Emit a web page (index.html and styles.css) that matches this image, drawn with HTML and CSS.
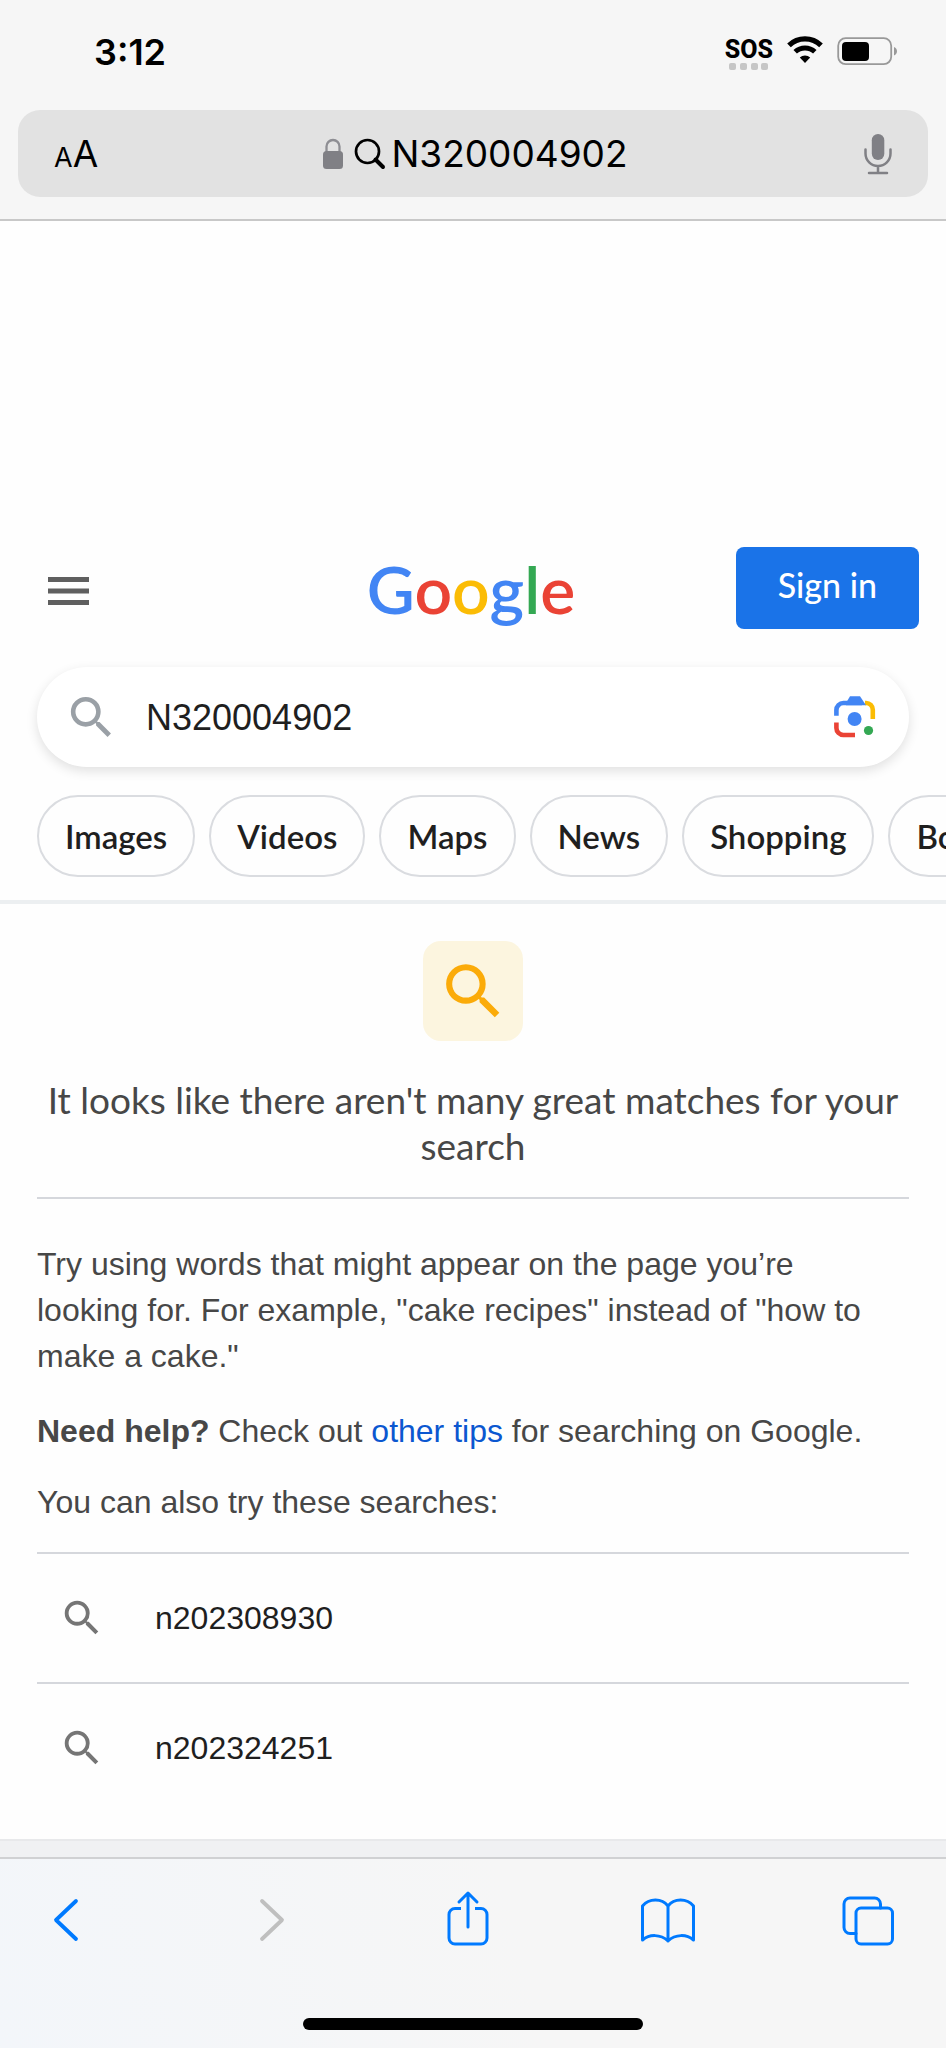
FILE: index.html
```html
<!DOCTYPE html>
<html lang="en">
<head>
<meta charset="utf-8">
<meta name="viewport" content="width=device-width, initial-scale=1">
<title>N320004902 - Google Search</title>
<link rel="stylesheet" href="styles.css">
</head>
<body>
<svg class="defs" aria-hidden="true">
  <symbol id="search" viewBox="0 0 24 24"><path d="M15.5 14h-.79l-.28-.27A6.471 6.471 0 0 0 16 9.5 6.5 6.5 0 1 0 9.5 16c1.61 0 3.09-.59 4.23-1.57l.27.28v.79l5 4.99L20.49 19l-4.99-5zm-6 0C7.01 14 5 11.99 5 9.5S7.01 5 9.5 5 14 7.01 14 9.5 11.99 14 9.5 14z"/></symbol>
</svg>

<header class="browser-top">
  <div class="status">
    <time class="clock">3:12</time>
    <div class="signals">
      <div class="sos"><span>SOS</span>
        <svg width="40" height="8" viewBox="0 0 40 8" fill="#c6c6c6" aria-hidden="true"><rect x="0" y="0" width="7" height="7" rx="2"/><rect x="11" y="0" width="7" height="7" rx="2"/><rect x="22" y="0" width="7" height="7" rx="2"/><rect x="32" y="0" width="7" height="7" rx="2"/></svg>
      </div>
      <svg width="36" height="28" viewBox="0 0 36 28" role="img" aria-label="Wi-Fi"><path d="M2 9.3a23 23 0 0 1 32 0" fill="none" stroke="#000" stroke-width="5.2"/><path d="M8.2 15.8a14.2 14.2 0 0 1 19.6 0" fill="none" stroke="#000" stroke-width="5"/><path d="M12.8 21.6a7.6 7.6 0 0 1 10.4 0L18 27z"/></svg>
      <svg width="62" height="30" viewBox="0 0 62 30" role="img" aria-label="Battery"><rect x="1.2" y="2.2" width="53" height="26" rx="7.5" fill="none" stroke="#999" stroke-width="1.8"/><rect x="5" y="6" width="27" height="19" rx="4"/><path d="M57 11c4 1.500 4 7 0 8.500z" fill="#999"/></svg>
    </div>
  </div>
  <div class="address">
    <button class="text-size" type="button" aria-label="Page settings"><span class="small-a">A</span><span>A</span></button>
    <div class="location">
      <svg width="22" height="32" viewBox="0 0 22 32" aria-hidden="true"><path d="M4.500 14V8.500a6.500 6.500 0 0 1 13 0V14" fill="none" stroke="#8e8e93" stroke-width="2.300"/><rect x="1" y="13" width="20" height="18" rx="3.500" fill="#808085"/></svg>
      <svg width="32" height="32" viewBox="0 0 32 32" fill="none" stroke="#000" aria-hidden="true"><circle cx="13.500" cy="13.500" r="11.500" stroke-width="2.700"/><path d="M21.500 21.500l7.500 7.500" stroke-width="4" stroke-linecap="round"/></svg>
      <span>N320004902</span>
    </div>
    <button class="mic" type="button" aria-label="Dictate"><svg width="28" height="42" viewBox="0 0 28 42" fill="none" stroke="#808085" stroke-width="2.500" stroke-linecap="round"><rect x="7.800" y="1" width="12.500" height="26" rx="6.200" fill="#808085" stroke="none"/><path d="M1.500 16.500v4a12.500 12.500 0 0 0 25 0v-4M14 33v7M5 40h18"/></svg></button>
  </div>
</header>

<main class="page">
  <div class="masthead">
    <button class="menu" type="button" aria-label="Main menu"><svg width="42" height="30" viewBox="0 0 42 30" stroke="#5f5f5f" stroke-width="5"><path d="M0 3.500h41M0 15h41M0 26.500h41"/></svg></button>
    <a class="logo" href="#" aria-label="Google"><svg width="220" height="83" viewBox="0 0 220 83"><text x="108" y="68" text-anchor="middle"><tspan fill="#4285f4">G</tspan><tspan fill="#ea4335">o</tspan><tspan fill="#fbbc05">o</tspan><tspan fill="#4285f4">g</tspan><tspan fill="#34a853">l</tspan><tspan fill="#ea4335">e</tspan></text></svg></a>
    <a class="sign-in" href="#">Sign in</a>
  </div>

  <form class="search-box" role="search">
    <svg class="search-icon" aria-hidden="true"><use href="#search"/></svg>
    <input type="text" aria-label="Search" value="N320004902">
    <button type="button" aria-label="Search by image"><svg width="42" height="42" viewBox="0 0 42 42" fill="none" stroke-width="4.600"><path d="M31 7h1a6.800 6.800 0 0 1 6.800 6.800V23" stroke="#fbbc04"/><path d="M2.400 19.700V14a7 7 0 0 1 7-7H28" stroke="#4285f4"/><path d="M12 7l4-6.700h10L32 9.300H12z" fill="#4285f4"/><path d="M2.400 26.500V32a7 7 0 0 0 7 7H21" stroke="#ea4335"/><circle cx="20.600" cy="23" r="7" fill="#4285f4"/><circle cx="34.500" cy="34.500" r="4.600" fill="#34a853"/></svg></button>
  </form>

  <nav class="chips" aria-label="Search filters">
    <a href="#">Images</a><a href="#">Videos</a><a href="#">Maps</a><a href="#">News</a><a href="#">Shopping</a><a href="#">Books</a>
  </nav>

  <section class="results">
    <div class="notice">
      <div class="badge"><svg aria-hidden="true"><use href="#search"/></svg></div>
      <h1>It looks like there aren't many great matches for your search</h1>
    </div>
    <div class="tips">
      <p>Try using words that might appear on the page you’re looking for. For example, "cake recipes" instead of "how to make a cake."</p>
      <p><strong>Need help?</strong> Check out <a href="#">other tips</a> for searching on Google.</p>
      <p>You can also try these searches:</p>
    </div>
    <ul class="suggestions">
      <li><a href="#"><svg aria-hidden="true"><use href="#search"/></svg>n202308930</a></li>
      <li><a href="#"><svg aria-hidden="true"><use href="#search"/></svg>n202324251</a></li>
    </ul>
  </section>
  <div class="page-footer"></div>
</main>

<footer class="toolbar">
  <nav class="tools" aria-label="Browser">
    <button type="button" aria-label="Back"><svg viewBox="0 0 56 64"><path d="M38 13L18 32l20 19" stroke-width="3.800"/></svg></button>
    <button type="button" aria-label="Forward" disabled><svg viewBox="0 0 56 64"><path d="M23 13l20 19-20 19" stroke-width="3.800"/></svg></button>
    <button type="button" aria-label="Share"><svg viewBox="0 0 56 64"><path d="M29 39V6M20 14l9-9 9 9"/><path stroke-linecap="butt" d="M22 20.500h-6a6 6 0 0 0-6 6V50a6 6 0 0 0 6 6h26a6 6 0 0 0 6-6V26.500a6 6 0 0 0-6-6h-6"/></svg></button>
    <button type="button" aria-label="Bookmarks"><svg viewBox="0 0 56 64"><path d="M28 18c-6-8-19-8-25.500 0v34c7-6 18-6 25.500 1 7.500-7 18.500-7 25.500-1V18C47 10 34 10 28 18zM28 18v35"/></svg></button>
    <button type="button" aria-label="Tabs"><svg viewBox="0 0 56 64"><rect x="16" y="20" width="36.500" height="36" rx="5"/><path d="M40.500 20v-4a6 6 0 0 0-6-6H10a6 6 0 0 0-6 6v23.500a6 6 0 0 0 6 6h6"/></svg></button>
  </nav>
  <div class="home-indicator"></div>
</footer>
</body>
</html>
```
FILE: styles.css
```css
* { box-sizing: border-box; }
body {
  margin: 0;
  min-height: 100vh;
  display: flex;
  flex-direction: column;
  overflow-x: hidden;
  background: #fefefe;
  color: #474747;
  font-family: "Liberation Sans", Arial, sans-serif;
}
button { padding: 0; border: 0; background: none; color: inherit; font: inherit; }
a { color: inherit; text-decoration: none; }
svg { display: block; flex: none; }
.defs { position: absolute; width: 0; height: 0; }

.browser-top {
  padding: 0 18px 22px;
  border-bottom: 2px solid #c8c8c8;
  background: #f6f6f6;
  color: #000;
  font-family: Inter, sans-serif;
}
.status {
  display: flex;
  justify-content: space-between;
  height: 110px;
  padding: 30px 29px 0 76px;
}
.clock { font-size: 36px; font-weight: 600; line-height: 44px; }
.signals { display: flex; align-items: flex-start; gap: 14px; padding-top: 6px; }
.sos {
  display: flex;
  flex-direction: column;
  align-items: center;
  font: 800 25px/27px Roboto, sans-serif;
}
.address {
  display: grid;
  grid-template-columns: 1fr auto 1fr;
  align-items: center;
  height: 87px;
  padding: 0 36px;
  border-radius: 22px;
  background: #e2e2e2;
  font-size: 37px;
}
.text-size { justify-self: start; }
.small-a { font-size: 27px; }
.location { display: flex; align-items: center; gap: 5px; margin-left: 4px; }
.location svg:first-child { margin-right: 5px; }
.mic { justify-self: end; }

.page { flex: 1; display: flex; flex-direction: column; padding-top: 325px; }
.masthead {
  display: grid;
  grid-template-columns: 1fr auto 1fr;
  align-items: center;
  height: 83px;
  padding: 0 27px;
}
.menu { justify-self: start; padding: 6px 0 0 21px; }
.logo text { font: 600 66px Lato, sans-serif; }
.sign-in {
  justify-self: end;
  padding: 0 42px 6px;
  border-radius: 8px;
  background: #1a73e8;
  color: #fff;
  font: 500 34px/76px Lato, sans-serif;
}
.search-box {
  display: flex;
  align-items: center;
  height: 100px;
  margin: 38px 37px 0;
  padding: 0 33px 0 27px;
  border-radius: 50px;
  background: #fff;
  box-shadow: 0 4px 12px rgba(0, 0, 0, 0.12);
}
.search-icon { width: 55px; height: 55px; fill: #9aa0a6; }
.search-box input {
  flex: 1;
  min-width: 0;
  margin-left: 27px;
  padding: 2px 0 0;
  border: 0;
  outline: 0;
  background: none;
  color: #1f1f1f;
  font: 36px "Liberation Sans", Arial, sans-serif;
}
.chips {
  display: flex;
  gap: 14px;
  padding: 28px 0 23px 37px;
  overflow: hidden;
  border-bottom: 4px solid #eceff1;
}
.chips a {
  flex: none;
  padding: 0 26px;
  border: 2px solid #dadce0;
  border-radius: 41px;
  color: #1f1f1f;
  font: 600 33px/78px Lato, sans-serif;
}
.results { flex: 1; padding: 37px 37px 0; }
.notice { padding-bottom: 28px; border-bottom: 2px solid #d5d7dc; }
.badge {
  display: grid;
  place-items: center;
  width: 100px;
  height: 100px;
  margin: 0 auto;
  border-radius: 18px;
  background: #fcf5df;
}
.badge svg { width: 73px; height: 73px; fill: #fbab09; }
h1 {
  margin: 36px 0 0;
  font: 400 37px/46px Lato, sans-serif;
  text-align: center;
}
.tips { padding: 42px 20px 27px 0; font-size: 32px; line-height: 46px; }
.tips p { margin: 0 0 25px; }
.tips p:first-child { margin-bottom: 29px; }
.tips p:last-child { margin-bottom: 0; }
.tips a { color: #0b57d0; }
.suggestions { margin: 0; padding: 0; list-style: none; }
.suggestions li { border-top: 2px solid #d5d7dc; }
.suggestions a {
  display: flex;
  align-items: center;
  gap: 50px;
  height: 128px;
  padding-left: 22px;
  color: #1f1f1f;
  font-size: 32px;
}
.suggestions svg { width: 46px; height: 46px; fill: #757575; }
.page-footer { height: 18px; border-top: 2px solid #e8e9eb; background: #f0f1f3; }

.toolbar {
  padding: 29px 0 18px;
  border-top: 2px solid #d0d1d3;
  background: linear-gradient(75deg, #f3f6fa, #f6f6f6 55%);
}
.tools { display: flex; justify-content: space-between; padding: 0 50px 0 38px; }
.tools button { width: 56px; height: 64px; color: #007aff; }
.tools button:disabled { color: #bfbfbf; }
.tools svg {
  fill: none;
  stroke: currentColor;
  stroke-width: 3;
  stroke-linecap: round;
  stroke-linejoin: round;
}
.home-indicator {
  width: 36%;
  height: 12px;
  margin: 66px auto 0;
  border-radius: 6px;
  background: #000;
}
```
